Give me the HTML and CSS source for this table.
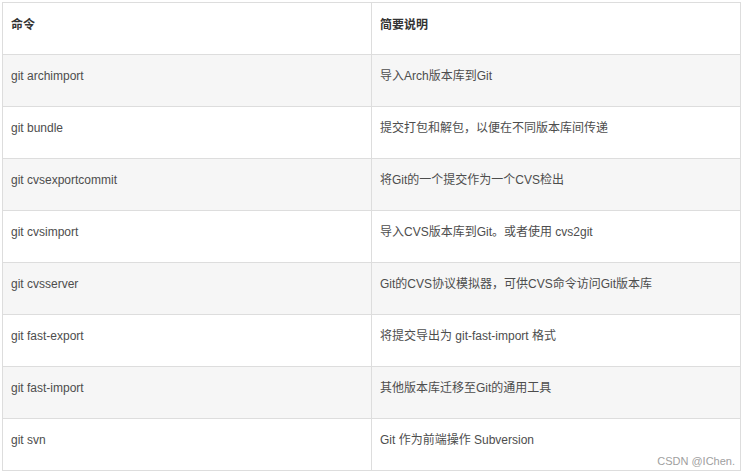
FILE: index.html
```html
<!DOCTYPE html>
<html lang="zh-CN">
<head>
<meta charset="utf-8">
<title>Git 命令</title>
<link rel="stylesheet" href="styles.css">
</head>
<body>
<div class="page">
  <table class="cmd-table">
    <thead>
      <tr><th>命令</th><th>简要说明</th></tr>
    </thead>
    <tbody>
      <tr><td>git archimport</td><td>导入Arch版本库到Git</td></tr>
      <tr><td>git bundle</td><td>提交打包和解包，以便在不同版本库间传递</td></tr>
      <tr><td>git cvsexportcommit</td><td>将Git的一个提交作为一个CVS检出</td></tr>
      <tr><td>git cvsimport</td><td>导入CVS版本库到Git。或者使用 cvs2git</td></tr>
      <tr><td>git cvsserver</td><td>Git的CVS协议模拟器，可供CVS命令访问Git版本库</td></tr>
      <tr><td>git fast-export</td><td>将提交导出为 git-fast-import 格式</td></tr>
      <tr><td>git fast-import</td><td>其他版本库迁移至Git的通用工具</td></tr>
      <tr><td>git svn</td><td>Git 作为前端操作 Subversion</td></tr>
    </tbody>
  </table>
  <span class="watermark">CSDN @IChen.</span>
</div>
</body>
</html>
```

FILE: styles.css
```css
html, body {
  margin: 0;
  padding: 0;
  background: #ffffff;
}

.page {
  position: relative;
  padding: 2px;
  width: 739px;
  font-family: "Liberation Sans", Arial, "Noto Sans CJK SC", sans-serif;
  font-size: 12px;
  color: #4d4d4d;
}

.cmd-table {
  width: 739px;
  border-collapse: collapse;
  table-layout: fixed;
}

.cmd-table th,
.cmd-table td {
  border: 1px solid #dddddd;
  padding: 11px 8px 20px 8px;
  line-height: 20px;
  height: 20px;
  text-align: left;
  vertical-align: top;
  white-space: nowrap;
}

.cmd-table th {
  font-weight: bold;
  color: #333333;
  padding-top: 12px;
  padding-bottom: 19px;
}

.cmd-table tbody tr:nth-child(odd) {
  background: #f6f6f6;
}

.watermark {
  position: absolute;
  right: 8px;
  bottom: 5px;
  font-size: 11px;
  line-height: 13px;
  color: #a0a0a0;
}
```
